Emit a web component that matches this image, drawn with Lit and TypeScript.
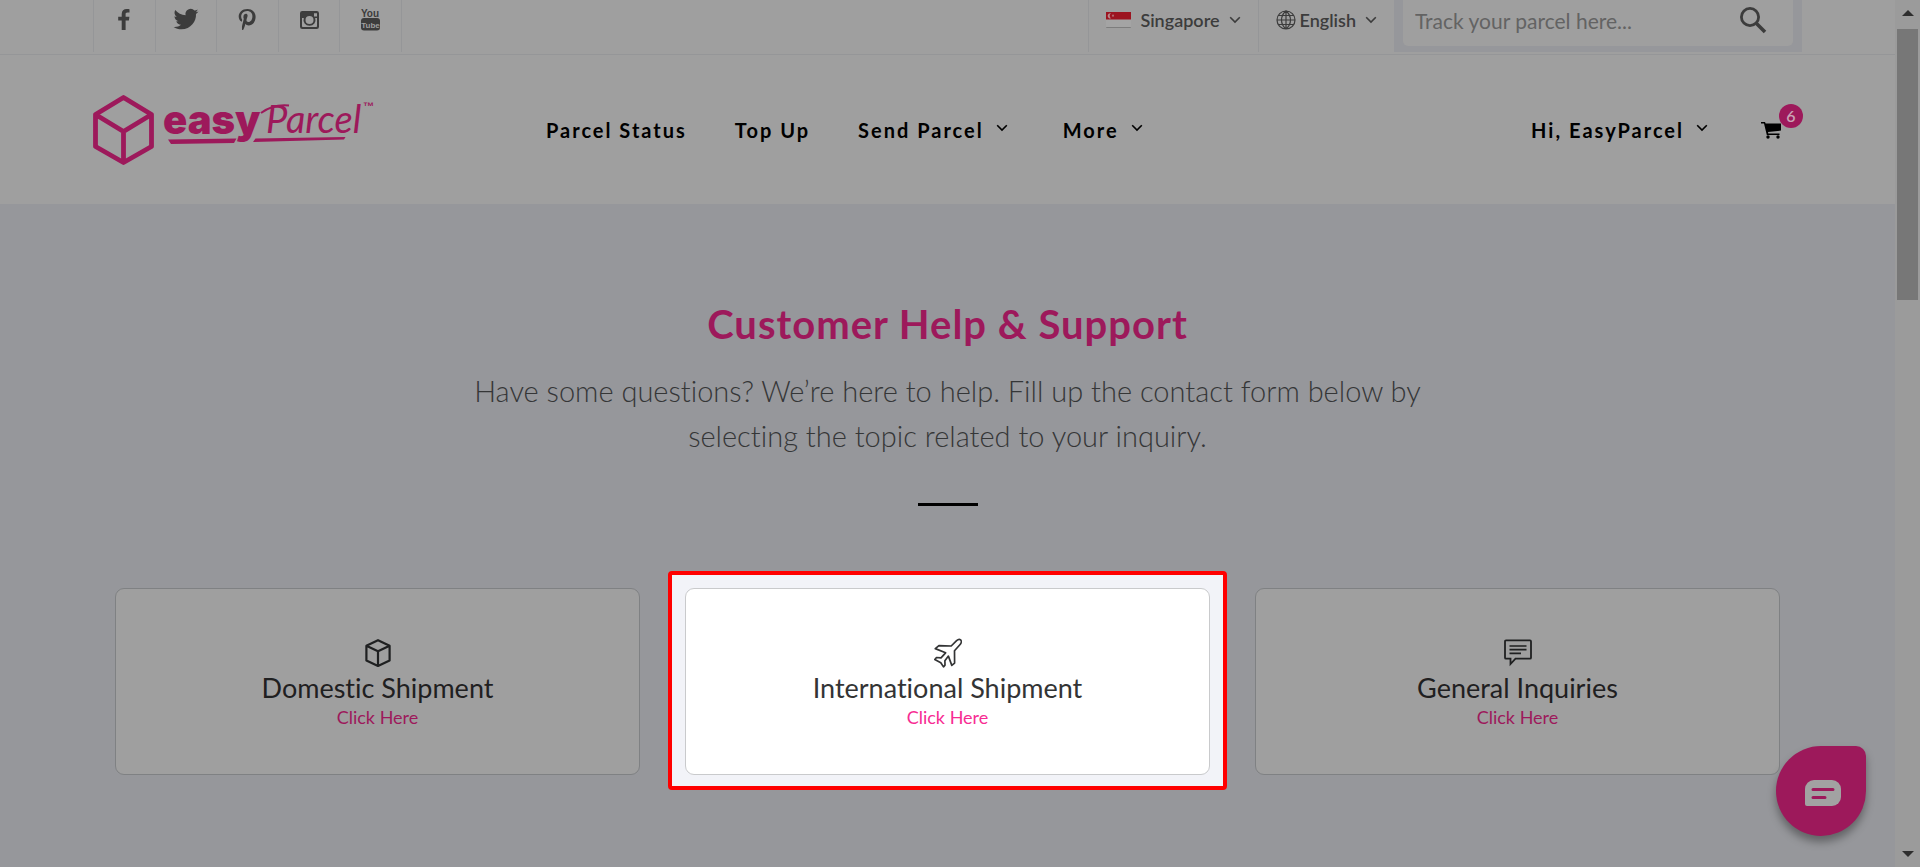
import { LitElement, html, css, svg } from "lit";
import { customElement, property } from "lit/decorators.js";

const chevron = html`<svg class="chevron" viewBox="0 0 12 8" width="12" height="8" aria-hidden="true">
  <path d="M1.2 1.2 6 6 10.8 1.2" fill="none" stroke="currentColor" stroke-width="1.6" />
</svg>`;

const socialIcons = [
  {
    name: "Facebook",
    art: svg`<path d="M20.500 5.200v3.400h-2c-1.600 0-1.900.7-1.900 1.800v2.300h3.800l-.5 3.700h-3.300V26h-3.900v-9.600H9.200v-3.700h3.500v-2.800c0-3.200 2-4.900 5-4.900 1.400 0 2.500.1 2.800.2z" />`,
  },
  {
    name: "Twitter",
    art: svg`<path d="M28.500 7.400c-.9.400-1.900.7-2.900.8 1.100-.6 1.700-1.600 2.100-2.800-1 .6-2 1-3.200 1.200A5.200 5.200 0 0 0 15.600 11.300C11.500 11.100 7.700 9.100 5.200 6c-1.400 2.500-.6 5.300 1.500 6.800-.8 0-1.500-.3-2.200-.6 0 2.500 1.700 4.500 4 5-.8.200-1.500.2-2.200.1.600 2 2.500 3.500 4.700 3.500-2.100 1.700-4.700 2.400-7.400 2.100 2.200 1.500 5 2.300 7.700 2.300 9.700 0 15.100-8.200 14.700-15.300 1-.7 1.900-1.600 2.500-2.500z" />`,
  },
  {
    name: "Pinterest",
    art: svg`<path d="M15.500 5C10 5 6.700 8.600 6.700 12.600c0 1.900 1 4.200 2.600 5 .3.100.4 0 .5-.2l.4-1.500c0-.2 0-.3-.1-.4-.6-.7-.9-1.700-.9-2.700 0-2.900 2.200-5.700 5.900-5.700 3.200 0 5.300 2.100 5.300 5.200 0 3.400-1.700 5.800-4 5.800-1.200 0-2.200-1-1.900-2.300.4-1.500 1.100-3.100 1.100-4.200 0-2.700-4.200-2.400-4.200 1.300 0 1.100.4 1.900.4 1.900l-1.700 7c-.2.900-.1 2.900 0 4.200h1c1.200-2 1.700-3.700 2.300-6.200.600 1 2 1.700 3.200 1.700 4.200 0 7-3.900 7-8.700C23.600 8.200 20.200 5 15.500 5z" />`,
  },
  {
    name: "Instagram",
    art: svg`<path fill-rule="evenodd" d="M8.300 7h14.400A2.300 2.300 0 0 1 25 9.300v13.400a2.300 2.300 0 0 1-2.300 2.300H8.300A2.300 2.300 0 0 1 6 22.700V9.300A2.300 2.300 0 0 1 8.300 7zM20 9.200v3.300h3V9.200zM8 14v8.200c0 .5.300.8.800.8h13.400c.5 0 .8-.3.8-.8V14h-1.800a6 6 0 1 1-11.400 0zm7.500-2a4 4 0 1 0 0 8 4 4 0 0 0 0-8z" />`,
  },
  {
    name: "YouTube",
    art: svg`<text x="15" y="13" text-anchor="middle" class="you">You</text>
      <rect x="6" y="14" width="19" height="12.500" rx="3" />
      <text x="15.500" y="23.500" text-anchor="middle" class="tube">Tube</text>`,
  },
];

const topicIcons: Record<string, unknown> = {
  box: html`<svg viewBox="0 0 28 30" width="28" height="30" aria-hidden="true">
    <path d="M14 2.200 25.600 7.800V22.400L14 28 2.400 22.400V7.800zM2.400 7.800 14 13.200 25.600 7.800M14 13.200V28" fill="none" stroke="currentColor" stroke-width="2.200" stroke-linejoin="round" />
  </svg>`,
  plane: html`<svg viewBox="0 0 28 30" width="28" height="30" aria-hidden="true">
    <path d="M26.600 1.900c-1.200-1-2.900-.3-4 .7l-5.400 5.400-12.300-.3-3.600 2.900 10.300 4.200-4.600 5-4.500-.300-1.700 2 6 3.200 2.700 4.200 1.500-1.800-.1-4.400 3.500-4.600 3.400 9.300 2.800-2.300-.1-12.400 5.600-6.200c1.100-1.200 1.600-3.500.5-4.600z" fill="none" stroke="currentColor" stroke-width="1.700" stroke-linejoin="round" />
  </svg>`,
  chat: html`<svg viewBox="0 0 28 30" width="28" height="30" aria-hidden="true">
    <path d="M2 2.400H26a1 1 0 0 1 1 1V19.700a1 1 0 0 1-1 1H11.500L6.500 26V20.700H2a1 1 0 0 1-1-1V3.400a1 1 0 0 1 1-1z" fill="none" stroke="currentColor" stroke-width="1.800" />
    <path d="M5.500 8H22.500M5.500 11.700H22.500M5.500 15.400H17" fill="none" stroke="currentColor" stroke-width="1.700" />
  </svg>`,
};

@customElement("topic-card")
class TopicCard extends LitElement {
  @property() heading = "";
  @property() icon = "box";
  @property({ type: Boolean, reflect: true }) active = false;

  static styles = css`
    :host {
      display: block;
      position: relative;
      color: #1f2021;
      --surface: #9f9f9f;
      --line: #7f8183;
      --link: #9d195b;
    }
    :host([active]) {
      color: #333435;
      --surface: #ffffff;
      --line: #c9cacc;
      --link: #f72c92;
    }
    :host([active])::before {
      content: "";
      position: absolute;
      inset: -17px -17px -15px;
      border: 4px solid #ff0000;
      border-radius: 4px;
      background: #f2f3f8;
    }
    .card {
      position: relative;
      display: flex;
      flex-direction: column;
      align-items: center;
      padding: 49px 16px 44px;
      border: 1px solid var(--line);
      border-radius: 9px;
      background: var(--surface);
      text-align: center;
    }
    .card svg {
      display: block;
    }
    .title {
      margin: 4px 0 0;
      font-size: 27px;
      line-height: 32px;
      font-weight: 400;
    }
    .link {
      font-size: 18px;
      line-height: 26px;
      color: var(--link);
      text-decoration: none;
    }
  `;

  render() {
    return html`<article class="card">
      ${topicIcons[this.icon]}
      <h2 class="title">${this.heading}</h2>
      <a class="link" href="#">Click Here</a>
    </article>`;
  }
}

@customElement("app-root")
class AppRoot extends LitElement {
  static styles = css`
    :host {
      display: flex;
      min-height: 100vh;
      font-family: Lato, "Liberation Sans", sans-serif;
      font-variant-ligatures: none;
      background: #96979b;
      color: #000;
      --pink: #9d195b;
      --paper: #9f9f9f;
      --rule: #959698;
    }
    * {
      box-sizing: border-box;
    }
    a {
      color: inherit;
      text-decoration: none;
    }
    button {
      font: inherit;
      color: inherit;
      background: none;
      border: 0;
      padding: 0;
      letter-spacing: inherit;
    }
    .page {
      flex: 1;
      min-width: 0;
    }
    .wrap {
      display: flex;
      margin: 0 93px;
    }
    .topbar {
      background: var(--paper);
      border-bottom: 1px solid var(--rule);
      padding-bottom: 2px;
      color: #3c3c3c;
    }
    .topbar .wrap {
      height: 52px;
    }
    .social {
      display: flex;
      width: 309px;
      border-left: 1px solid var(--rule);
    }
    .social a {
      display: flex;
      flex: 1;
      justify-content: center;
      padding-top: 4px;
      border-right: 1px solid var(--rule);
    }
    .social svg {
      display: block;
      fill: currentColor;
    }
    .you {
      font: 700 10px "Liberation Sans", sans-serif;
    }
    .tube {
      font: 700 8px "Liberation Sans", sans-serif;
      fill: var(--paper);
    }
    .locale {
      display: flex;
      margin-left: auto;
      font-size: 18px;
      font-weight: 600;
    }
    .locale button {
      display: flex;
      align-items: center;
      gap: 9px;
      padding: 0 17px 12px;
      border-left: 1px solid var(--rule);
    }
    .lang {
      display: flex;
      align-items: center;
      gap: 4px;
    }
    .search {
      width: 408px;
      padding: 0 9px 6px;
      background: #96979b;
    }
    .searchbox {
      display: flex;
      height: 46px;
      padding: 0 26px 6px 12px;
      align-items: center;
      background: var(--paper);
      border-radius: 0 0 5px 5px;
    }
    .searchbox input {
      flex: 1;
      min-width: 0;
      padding: 0;
      border: 0;
      background: none;
      font: 400 21px Lato, sans-serif;
      color: #3c3c3c;
    }
    .searchbox input::placeholder {
      color: #636363;
      opacity: 1;
    }
    .searchbox svg {
      display: block;
    }
    .masthead {
      background: var(--paper);
    }
    .masthead .wrap {
      height: 149px;
      align-items: center;
      font-size: 20px;
      font-weight: 700;
      letter-spacing: 2px;
    }
    .brand {
      letter-spacing: 0;
    }
    .brand svg {
      display: block;
    }
    .easy {
      font: 900 40px Inter, sans-serif;
    }
    .parcel {
      font: italic 400 38px Lato, sans-serif;
    }
    .tm {
      font: 700 11px "Liberation Sans", sans-serif;
    }
    .nav {
      display: flex;
      gap: 48px;
      margin-left: 172px;
    }
    .drop {
      display: flex;
      align-items: center;
      gap: 12px;
      margin-right: 7px;
    }
    .drop svg {
      margin-bottom: 3px;
    }
    .account {
      display: flex;
      align-items: center;
      gap: 46px;
      margin-left: auto;
    }
    .cart {
      position: relative;
      padding-right: 21px;
    }
    .cart svg {
      display: block;
    }
    .badge {
      position: absolute;
      right: -1px;
      bottom: 11px;
      width: 24px;
      height: 24px;
      border-radius: 50%;
      background: var(--pink);
      color: #c9a3b5;
      font-size: 16px;
      line-height: 24px;
      font-weight: 600;
      letter-spacing: 0;
      text-align: center;
    }
    .hero {
      padding: 96px 0 0;
      text-align: center;
    }
    .hero h1 {
      margin: 0;
      font-size: 40px;
      line-height: 48px;
      font-weight: 700;
      letter-spacing: 1px;
      color: var(--pink);
    }
    .hero p {
      max-width: 1000px;
      margin: 20px auto 0;
      font-size: 29px;
      line-height: 45px;
      font-weight: 300;
      color: #353637;
    }
    .bar {
      width: 60px;
      height: 3px;
      margin: 45px auto 82px;
      border: 0;
      background: #000;
    }
    .topics {
      display: grid;
      grid-template-columns: repeat(3, 1fr);
      gap: 45px;
      margin: 0 115px;
    }
    .chat {
      position: fixed;
      right: 54px;
      bottom: 31px;
      display: grid;
      place-items: center;
      width: 90px;
      height: 90px;
      padding: 3px 0 0 3px;
      border-radius: 45px 10px 45px 45px;
      background: var(--pink);
      box-shadow: 0 6px 8px rgba(0, 0, 0, 0.35);
    }
    .rail {
      display: flex;
      flex-direction: column;
      align-items: center;
      width: 25px;
      padding: 10px 2px;
      background: #9b9b9b;
    }
    .thumb {
      width: 21px;
      height: 271px;
      margin-top: 13px;
      background: #777;
    }
    .rail svg {
      display: block;
    }
    .down {
      margin-top: auto;
    }
  `;

  render() {
    return html`
      <div class="page">
        <div class="topbar">
          <div class="wrap">
            <nav class="social" aria-label="Social media">
              ${socialIcons.map(
                (s) => html`<a href="#" aria-label=${s.name}><svg viewBox="0 0 31 31" width="31" height="31">${s.art}</svg></a>`
              )}
            </nav>
            <div class="locale">
              <button type="button">
                <svg viewBox="0 0 25 16" width="25" height="16" aria-hidden="true">
                  <rect y="8" width="25" height="8" rx="1" fill="#7d7d7d" />
                  <rect y="7" width="25" height="8" fill="#a4a4a4" />
                  <rect width="25" height="7.500" fill="#9c1420" />
                  <path d="M5 1.300a2.600 2.600 0 1 0 0 5 3 3 0 0 1 0-5z" fill="#b98b8e" />
                  <circle cx="7" cy="3.700" r="1.100" fill="#b06a70" />
                </svg>
                <span>Singapore</span>${chevron}
              </button>
              <button type="button">
                <span class="lang">
                  <svg viewBox="0 0 20 20" width="20" height="20" aria-hidden="true">
                    <path d="M10 1a9 9 0 1 0 0 18 9 9 0 0 0 0-18zM10 1v18M1 10h18M2.400 5.500h15.200M2.400 14.500h15.200M10 1C4 6 4 14 10 19M10 1c6 5 6 13 0 18" fill="none" stroke="currentColor" stroke-width="1.200" />
                  </svg>
                  <span>English</span>
                </span>
                ${chevron}
              </button>
            </div>
            <form class="search" role="search">
              <div class="searchbox">
                <input type="text" aria-label="Track your parcel" placeholder="Track your parcel here..." />
                <button type="button" aria-label="Search">
                  <svg viewBox="0 0 28 28" width="28" height="28">
                    <circle cx="11" cy="11" r="8.600" fill="none" stroke="currentColor" stroke-width="2.800" />
                    <path d="M17.500 17.500 26 26" stroke="currentColor" stroke-width="3.600" />
                  </svg>
                </button>
              </div>
            </form>
          </div>
        </div>

        <header class="masthead">
          <div class="wrap">
            <a class="brand" href="#" aria-label="easyParcel">
              <svg viewBox="0 0 281 70" width="281" height="70" fill="#9d195b">
                <path d="M30.500 2.500 58.500 19.500V51.500L30.500 67.500 2.500 51.500V19.500zM2.500 19.500 30.500 36.500 58.500 19.500M30.500 36.500V67.500" fill="none" stroke="#9d195b" stroke-width="4.800" stroke-linejoin="round" />
                <text class="easy" x="70" y="39">easy</text>
                <path d="M75 44.500 143.500 43.500 141 48 78 49zM162.500 43.500 252.500 42 251 44.500 160 47z" />
                <text class="parcel" x="173" y="38">Parcel</text>
                <path d="M168 18c8-6 18-8.500 28-7.500" fill="none" stroke="#9d195b" stroke-width="2" />
                <text class="tm" x="270" y="15">™</text>
              </svg>
            </a>
            <nav class="nav" aria-label="Main">
              <a href="#">Parcel Status</a>
              <a href="#">Top Up</a>
              <a class="drop" href="#">Send Parcel ${chevron}</a>
              <a class="drop" href="#">More ${chevron}</a>
            </nav>
            <div class="account">
              <a class="drop" href="#">Hi, EasyParcel ${chevron}</a>
              <a class="cart" href="#" aria-label="Cart">
                <svg viewBox="0 0 20 18" width="20" height="18">
                  <path d="M0 1h4l.6 1.500H20V9.600L7 11l.3 1.500H18.500V14H5.800L3 2.500H0z" />
                  <circle cx="7" cy="16" r="1.700" /><circle cx="17" cy="16" r="1.700" />
                </svg>
                <span class="badge">6</span>
              </a>
            </div>
          </div>
        </header>

        <main class="hero">
          <h1>Customer Help &amp; Support</h1>
          <p>Have some questions? We’re here to help. Fill up the contact form below by selecting the topic related to your inquiry.</p>
          <hr class="bar" />
          <section class="topics">
            <topic-card heading="Domestic Shipment" icon="box"></topic-card>
            <topic-card heading="International Shipment" icon="plane" active></topic-card>
            <topic-card heading="General Inquiries" icon="chat"></topic-card>
          </section>
        </main>
      </div>

      <div class="rail" aria-hidden="true">
        <svg viewBox="0 0 12 6" width="12" height="6"><path d="M0 6 6 0 12 6z" fill="#2e2e2e" /></svg>
        <div class="thumb"></div>
        <svg class="down" viewBox="0 0 12 6" width="12" height="6"><path d="M0 0 6 6 12 0z" fill="#2e2e2e" /></svg>
      </div>

      <button class="chat" type="button" aria-label="Open chat">
        <svg viewBox="0 0 38 28" width="38" height="28">
          <path d="M10 1H28a9 9 0 0 1 9 9v8a9 9 0 0 1-9 9H3a2 2 0 0 1-2-2V10a9 9 0 0 1 9-9z" fill="#a2a2a2" />
          <path d="M9 10.500H29M9 18.500H21" stroke="#9d195b" stroke-width="3" stroke-linecap="round" />
        </svg>
      </button>
    `;
  }
}
